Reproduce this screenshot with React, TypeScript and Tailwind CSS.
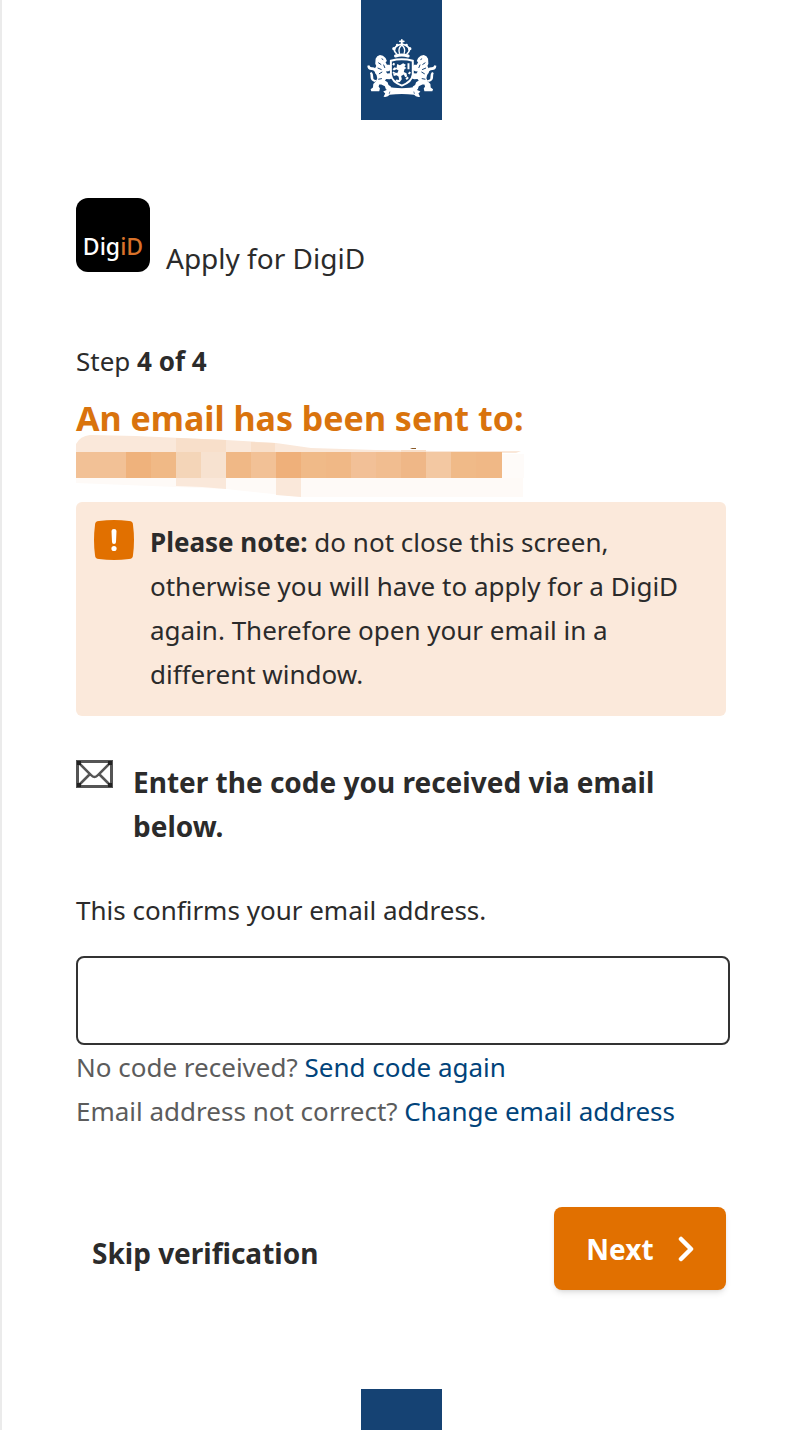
import React, { useState } from 'react';

// Tints for the blurred-out address, one cell per 25px
const maskCells = [
  '#f2c196', '#f2c196', '#efb27c', '#f0b986', '#f4d5b8', '#f7e2d0', '#f0b886', '#f2c196', '#efb07a',
  '#f0ba88', '#f0b886', '#f2c097', '#f1bd90', '#efb787', '#f3c8a2', '#f0ba88', '#f0b886',
];

function Lion() {
  return (
    <g fill="#fff">
      <path d="M74 176l5-7 8-4 9 2 8 7 4 9-4 4 4 7 8 0 5 6v9l-8 5-8 1 4 6 10-1 6 6-1 9-8 3-10-1-4 5 8 5 3 8 7 5-1 8h-14l-3-9-11-5-6 0-2 6 4 6-2 8H61l-2-6 7-5 1-11 8-8 4-9-2-9-5-9-1-10 5-9-3-7z" />
      <path d="M72 246q-13-3-13-13t-2-14l5-3q6 6 5 16t11 8zM74 222q-2-12-13-12t-12-13l6-1q2 7 9 6 12 1 14 12z" />
      <path d="M92 176l5 3M82 188l9 6M80 204l12 5M98 194l4 10M84 222l10-6M82 238l11-2" fill="none" stroke="#154273" strokeWidth="3" />
    </g>
  );
}

function CoatOfArms() {
  return (
    <svg viewBox="30 0 244 360" className="block h-full w-full" aria-hidden="true">
      {/* Crown */}
      <g fill="none" stroke="#fff" strokeWidth="5" strokeLinecap="round">
        <path d="M153 119v12M147 124h12" />
        <path d="M137 161c-13-11-5-25 16-29 21 4 29 18 16 29" />
        <path d="M146 160c-4-11-1-18 7-25 8 7 11 14 7 25" strokeWidth="4" />
        <path d="M134 168q19-6 38 0" strokeWidth="9" />
      </g>
      <g fill="#fff">
        <circle cx="129" cy="146" r="5" />
        <circle cx="139" cy="135" r="4" />
        <circle cx="167" cy="135" r="4" />
        <circle cx="177" cy="146" r="5" />
      </g>
      {/* Supporters */}
      <Lion />
      <g transform="translate(306 0) scale(-1 1)">
        <Lion />
      </g>
      {/* Shield */}
      <path d="M120 182q33-8 66 0v42q-3 22-33 33-30-11-33-33z" fill="#154273" stroke="#fff" strokeWidth="6" />
      <path d="M139 192l8 4 10-6 8 4-4 6 6 4-6 4-2 8 8 4 2 10-6 2-4-8-8 4 2 10-6 8-8 2-2-5 8-4-2-9-6-4-8 2-2-6 8-4 4 2 4-8-6-4-8 4-4-4 6-6 6 2z" fill="#fff" />
      <path d="M173 190v18M130 190l-3 6M130 216l-3 5M174 222l4-6M166 238l6-6M136 240l6 5" stroke="#fff" strokeWidth="6" />
      {/* Ribbon */}
      <path d="M105 260q48 10 96 0l-2 10 10 5-6 6 5 10q-13 2-18-6-37-5-74 0-5 8-18 6l5-10-6-6 10-5z" fill="#fff" />
      <path d="M115 282l2-7M191 282l-2-7" fill="none" stroke="#154273" strokeWidth="2" />
    </svg>
  );
}

function MaskedAddress() {
  return (
    <svg viewBox="0 0 452 64" className="block h-16 w-[452px] max-w-full" role="img" aria-label="Hidden email address">
      <path d="M0 18V10Q4 2 14 1L60 2L150 6L200 9L235 14L300 16L360 17L445 17L440 19H0z" fill="#fae8da" />
      <path d="M100 4L150 6V18H100zM175 8L199 9V18H175zM325 16h25v2h-25z" fill="#f8dfca" />
      <path d="M0 44H447V63H225L150 55L0 49z" fill="#fefaf7" />
      <path d="M100 44H150V55L126 53L100 52zM200 44h25v19l-25-2z" fill="#fae8da" />
      <path d="M426 20h22v24h-22z" fill="#fefbf9" />
      <path d="M334 15l2-1h4v1z" fill="#8a5a28" />
      {maskCells.map((color, i) => (
        <rect key={i} x={i * 25} y={18} width={i === 16 ? 26 : 25} height={26} fill={color} />
      ))}
    </svg>
  );
}

export default function App() {
  const [code, setCode] = useState('');

  return (
    <div className="flex min-h-screen flex-col border-l-2 border-[#ebebeb] bg-white font-['Noto_Sans',sans-serif] text-[26px] leading-11 text-[#2b2b2b]">
      <div className="mx-auto h-[120px] w-[81px] bg-[#154273]">
        <CoatOfArms />
      </div>

      <main className="pt-[78px] pr-[70px] pl-[74px]">
        <header className="flex items-end gap-4">
          <div className="flex h-[74px] w-[74px] items-end justify-center rounded-xl bg-black pb-2 text-[23px] leading-9 font-medium text-white">
            <span>Dig<span className="text-[#d9722a]">iD</span></span>
          </div>
          <span className="text-[28px] leading-7">Apply for DigiD</span>
        </header>

        <p className="mt-[67px]">
          Step <strong>4 of 4</strong>
        </p>
        <h1 className="mt-[19px] text-[34px] leading-8 font-bold text-[#d9730d]">An email has been sent to:</h1>
        <MaskedAddress />

        <div className="mt-1 mr-1 flex gap-4 rounded-md bg-[#fbe9db] pt-[18px] pr-10 pb-5 pl-[18px]">
          <svg viewBox="0 0 40 40" className="h-10 w-10 shrink-0" aria-hidden="true">
            <path d="M5 1Q20-1 35 1Q39 1 39 5Q41 20 39 35Q39 39 35 39Q20 41 5 39Q1 39 1 35Q-1 20 1 5Q1 1 5 1z" fill="#e17000" />
            <path d="M17.500 11Q17.500 9 20 9T22.500 11L22 22Q22 24 20 24T18 22z" fill="#fff" />
            <circle cx="20" cy="28.500" r="2.600" fill="#fff" />
          </svg>
          <p>
            <strong>Please note:</strong> do not close this screen, otherwise you will have to apply for a DigiD again. Therefore open your email in a{' '}
            <span className="whitespace-nowrap">different window.</span>
          </p>
        </div>

        <form onSubmit={(e) => e.preventDefault()}>
          <div className="mt-11 flex gap-5">
            <svg viewBox="0 0 37 28" className="h-7 w-[37px] shrink-0" fill="none" stroke="#555" aria-hidden="true">
              <rect x="1.500" y="1.500" width="34" height="25" strokeWidth="3" />
              <path d="M2 2L15 15Q18.500 19 22 15L35 2M2 26L14 14M35 26L23 14" strokeWidth="2.500" />
              <path d="M1 3h4M32 3h4M1 25h4M32 25h4" stroke="#222" strokeWidth="4" />
            </svg>
            <h2 className="text-[28px] leading-11 font-bold">Enter the code you received via email below.</h2>
          </div>

          <label htmlFor="code" className="mt-10 block">This confirms your email address.</label>
          <input
            id="code"
            type="text"
            value={code}
            onChange={(e) => setCode(e.target.value)}
            className="mt-6 block h-[89px] w-full rounded-lg border-2 border-[#333] bg-white px-5 outline-none"
          />
          <div className="text-[#5c5c5c]">
            <p>No code received? <a href="#resend" className="text-[#01437a]">Send code again</a></p>
            <p>Email address not correct? <a href="#change" className="text-[#01437a]">Change email address</a></p>
          </div>

          <div className="mt-[74px] mr-1 flex items-center justify-between">
            <button type="button" className="px-4 pt-2 text-[28px] font-bold">Skip verification</button>
            <button type="submit" className="flex h-[83px] w-[172px] items-center justify-center gap-6 rounded-lg bg-[#e17000] text-[28px] font-bold text-white shadow-md">
              Next
              <svg viewBox="0 0 16 26" className="h-[26px] w-4" fill="none" stroke="currentColor" strokeWidth="4.500" strokeLinecap="round" strokeLinejoin="round" aria-hidden="true">
                <path d="M3 3L13 13L3 23" />
              </svg>
            </button>
          </div>
        </form>
      </main>

      <footer className="mt-auto pt-20">
        <div className="mx-auto h-[41px] w-[81px] bg-[#154273]" />
      </footer>
    </div>
  );
}
